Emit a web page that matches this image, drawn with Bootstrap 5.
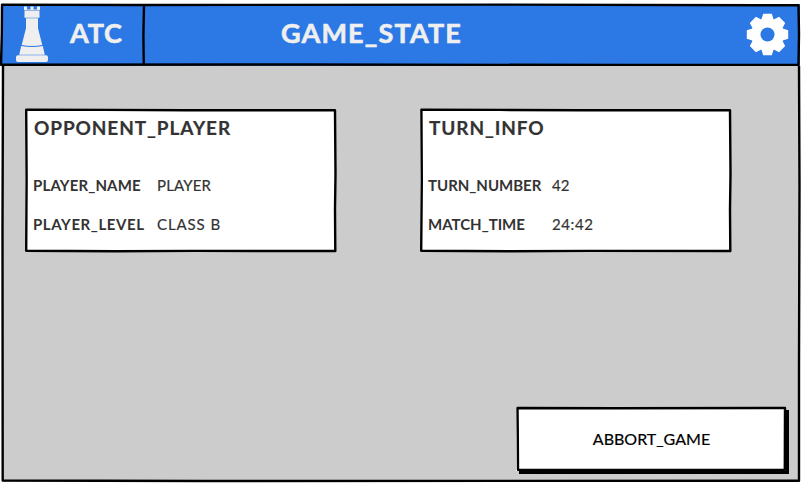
<!DOCTYPE html>
<html lang="en">
<head>
<meta charset="utf-8">
<meta name="viewport" content="width=device-width, initial-scale=1">
<title>ATC - GAME_STATE</title>
<link href="https://cdn.jsdelivr.net/npm/bootstrap@5.3.0/dist/css/bootstrap.min.css" rel="stylesheet">
<style>
  body { font-family: Lato, "Open Sans", sans-serif; color: #333; background: #fff; font-size: 15px; }
  .screen { width: 801px; height: 483px; padding: 4px 1px 1px 1px; }
  .outline { position: absolute; inset: 0; width: 100%; height: 100%; overflow: visible; pointer-events: none; fill: none; stroke: #000; stroke-width: 2.4; stroke-linejoin: round; }
  .topbar { height: 62px; background: #2c78e4; color: #efefef; }
  .brand { width: 142px; padding-left: 14px; }
  .brand-name, .page-title { font-size: 27px; font-weight: 700; line-height: 32px; -webkit-text-stroke: .6px #efefef; }
  .brand-name { margin: 0 0 4px 21px; letter-spacing: .8px; }
  .page-title { margin: 0 0 4px; padding-left: 138px; letter-spacing: 1.15px; }
  .gear { margin: 0 11px 2px 0; }
  .stage { background: #ccc; margin: 0 0 0 2px; padding: 43px 67px 11px 22px; }
  .panels { gap: 84px; }
  .panel { width: 311px; height: 143px; background: #fff; padding: 7px 8px; }
  .panel-title { font-size: 19px; line-height: 24px; font-weight: 700; letter-spacing: .9px; margin: 0 0 0 1px; -webkit-text-stroke: .2px #333; }
  .facts { margin: 35px 0 0; grid-template-columns: 124px 1fr; row-gap: 19px; line-height: 20px; }
  .facts dt, .facts dd { margin: 0; white-space: nowrap; }
  .facts dd { -webkit-text-stroke: .2px #333; }
  .facts .tight { letter-spacing: .15px; }
  .facts .wide { letter-spacing: .58px; }
  .facts .wider { letter-spacing: .9px; }
  .abort { width: 270px; height: 64px; border-radius: 0; border: 0; background: #fff; color: #000; font-size: 16px; box-shadow: 3px 3px 0 #000; margin-right: -53px; padding-left: 13px; -webkit-text-stroke: .2px #000; }
  .abort:hover { background: #fff; color: #000; }
</style>
</head>
<body>
<main class="screen d-flex flex-column position-relative">
  <header class="topbar d-flex align-items-center position-relative">
    <div class="brand d-flex align-items-center h-100 flex-shrink-0">
      <svg width="34" height="62" viewBox="0 0 34 62" fill="#efefef" aria-hidden="true">
        <path d="M9 2.500h3v3h3.500v-3h3v3h3.500v-3h3V6H9zM9.500 6.500h15v7.300h-15zM11 14.300h12v10l4.300 16.700q-10.300 2-20.600 0l4.300-16.700zM6.200 42q10.800 2 21.600 0l2 8.800H4.200zM3 51.200h28q2 0 2 2v2.800q0 2-2 2H3q-2 0-2-2v-2.800q0-2 2-2z"/>
      </svg>
      <span class="brand-name">ATC</span>
    </div>
    <h1 class="page-title">GAME_STATE</h1>
    <svg class="gear ms-auto" width="43" height="43" viewBox="-21.5 -21.5 43 43" role="img" aria-label="Settings">
      <g fill="#fff"><circle r="15.800"/>
        <path id="tooth" d="M-6.500 -14.500L-5.800 -16 -4.300 -20.700H4.300L5.800 -16 6.500 -14.500V14.500L5.800 16 4.300 20.700H-4.300L-5.800 16 -6.500 14.500z"/>
        <use href="#tooth" transform="rotate(45)"/><use href="#tooth" transform="rotate(90)"/><use href="#tooth" transform="rotate(135)"/>
      </g>
      <circle r="7" fill="#2c78e4"/>
    </svg>
    <svg class="outline" viewBox="0 0 799 62" preserveAspectRatio="none" aria-hidden="true">
      <path d="M1 .6L130 1 500 .6 797.500 1.300 798 30 797.500 60.800 620 61 300 60.500 0 60.700 .8 30zM143 1L142.400 32 142.800 61"/>
    </svg>
  </header>
  <section class="stage flex-grow-1 d-flex flex-column position-relative">
    <div class="panels d-flex">
      <article class="panel position-relative flex-shrink-0">
        <h2 class="panel-title">OPPONENT_PLAYER</h2>
        <dl class="facts d-grid">
          <dt class="tight">PLAYER_NAME</dt><dd class="tight">PLAYER</dd>
          <dt class="wide">PLAYER_LEVEL</dt><dd class="wider">CLASS B</dd>
        </dl>
        <svg class="outline" viewBox="0 0 311 143" preserveAspectRatio="none" aria-hidden="true"><path d="M1.200 .8L80 .9 160 1.300 310 1.100 310.500 65 310 100 310.300 142 170 141.900 90 142.200 1.200 141.700 1.600 70z"/></svg>
      </article>
      <article class="panel position-relative flex-shrink-0">
        <h2 class="panel-title">TURN_INFO</h2>
        <dl class="facts d-grid">
          <dt>TURN_NUMBER</dt><dd class="tight">42</dd>
          <dt>MATCH_TIME</dt><dd class="wide">24:42</dd>
        </dl>
        <svg class="outline" viewBox="0 0 311 143" preserveAspectRatio="none" aria-hidden="true"><path d="M1.400 .8L80 .9 160 1.300 310 1.100 310.500 65 310 100 310.300 142 170 141.900 90 142.200 1.200 141.700 1.800 70z"/></svg>
      </article>
    </div>
    <button type="button" class="abort btn mt-auto align-self-end position-relative">ABBORT_GAME
      <svg class="outline" viewBox="0 0 270 64" preserveAspectRatio="none" aria-hidden="true"><path d="M1.500 1L100 1.200 269 1 268.800 63 2 62.700 1.800 30z"/></svg>
    </button>
    <svg class="outline" viewBox="0 0 797 416" preserveAspectRatio="none" aria-hidden="true"><path d="M0 0L-.5 160 -.3 414.500 200 415 796 414.700 796 300 796.500 120 796 0"/></svg>
  </section>
</main>
<script src="https://cdn.jsdelivr.net/npm/bootstrap@5.3.0/dist/js/bootstrap.bundle.min.js"></script>
</body>
</html>
